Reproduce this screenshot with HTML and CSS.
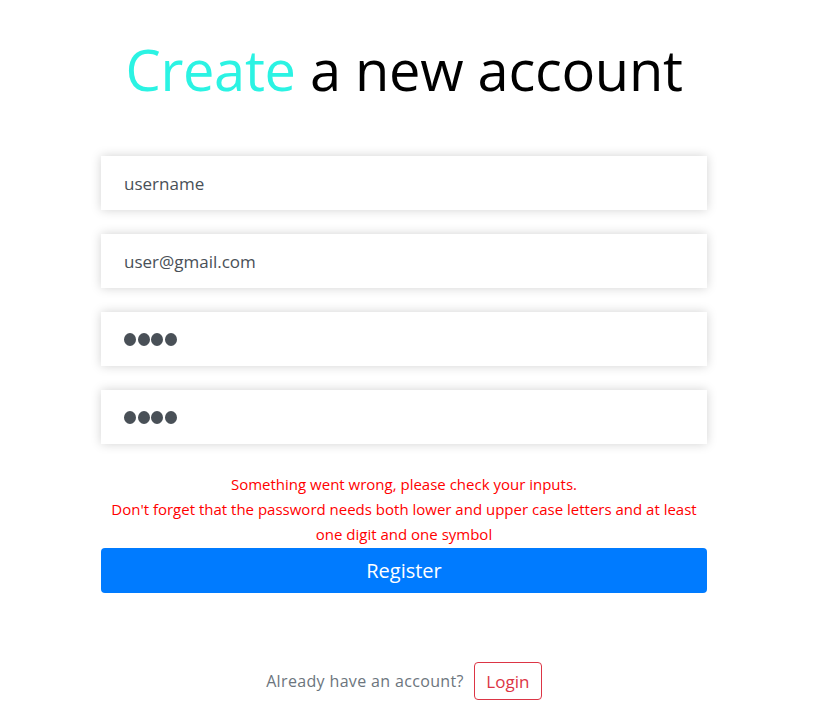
FILE: index.html
```html
<!DOCTYPE html>
<html lang="en">
<head>
<meta charset="utf-8">
<title>Register</title>
<link rel="stylesheet" href="styles.css">
</head>
<body>
<main class="page">
  <h1 class="title"><span class="accent">Create</span> a new account</h1>
  <form class="form">
    <div class="field">username</div>
    <div class="field">user@gmail.com</div>
    <div class="field" aria-label="password"><span class="dot"></span><span class="dot"></span><span class="dot"></span><span class="dot"></span></div>
    <div class="field" aria-label="confirm password"><span class="dot"></span><span class="dot"></span><span class="dot"></span><span class="dot"></span></div>
    <div class="errors">
      <p>Something went wrong, please check your inputs.</p>
      <p>Don't forget that the password needs both lower and upper case letters and at least one digit and one symbol</p>
    </div>
    <button type="button" class="btn-register">Register</button>
  </form>
  <div class="login-row">
    <span class="login-text">Already have an account?</span>
    <button type="button" class="btn-login">Login</button>
  </div>
</main>
</body>
</html>
```
FILE: styles.css
```css
* { box-sizing: border-box; }
html, body { margin: 0; padding: 0; background: #fff; }
body {
  font-family: "Open Sans", "DejaVu Sans", sans-serif;
}
.page {
  width: 606px;
  margin-left: 101px;
  display: flex;
  flex-direction: column;
}
.title {
  margin: 0;
  padding-top: 33px;
  height: 156px;
  text-align: center;
  font-size: 56px;
  font-weight: 500;
  line-height: 72px;
  color: #000;
  letter-spacing: -0.3px;
}
.accent { color: #2bf3e3; }
.form {
  display: flex;
  flex-direction: column;
  gap: 24px;
}
.field {
  height: 54px;
  background: #fff;
  box-shadow: 0 0 10px rgba(0, 0, 0, 0.18);
  padding-left: 23px;
  display: flex;
  align-items: center;
  font-size: 17px;
  color: #495057;
}
.dot {
  width: 12px;
  height: 13px;
  border-radius: 50%;
  background: #495057;
  margin-right: 1.5px;
}
.errors {
  margin-top: 4px;
  text-align: center;
  color: #ff0000;
  font-size: 15px;
  line-height: 25px;
  margin-bottom: -23px;
}
.errors p { margin: 0; }
.btn-register {
  height: 45px;
  border: none;
  border-radius: 4px;
  background: #007bff;
  color: #fff;
  font-family: inherit;
  font-size: 20px;
  font-weight: 400;
}
.login-row {
  margin-top: 69px;
  display: flex;
  justify-content: center;
  align-items: center;
  gap: 10px;
}
.login-text {
  font-size: 16px;
  letter-spacing: 0.35px;
  color: #6c757d;
}
.btn-login {
  height: 38px;
  width: 68px;
  padding: 0;
  border: 1px solid #dc3545;
  border-radius: 4px;
  background: #fff;
  color: #dc3545;
  font-family: inherit;
  font-size: 17px;
}
```
